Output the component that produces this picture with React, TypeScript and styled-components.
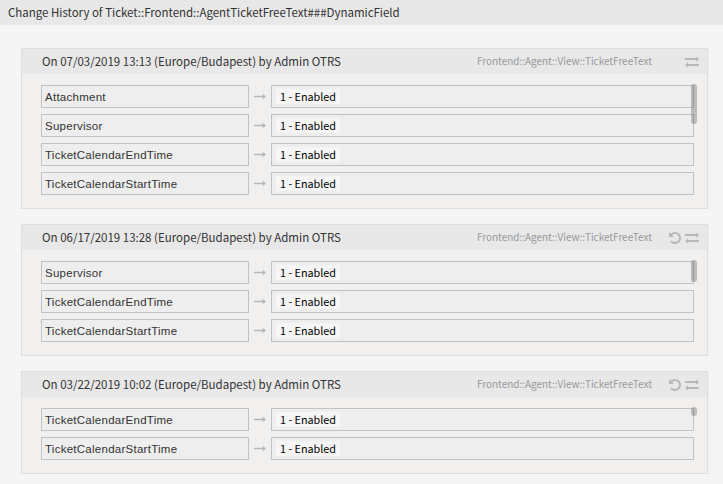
import React from 'react';
import styled, { createGlobalStyle } from 'styled-components';

const GlobalStyle = createGlobalStyle`
  * { box-sizing: border-box; }
  body {
    margin: 0;
    background: #f5f5f5;
    font-family: "Noto Sans CJK SC", "Noto Sans", sans-serif;
    color: #333;
    overflow: hidden;
  }
`;

const Page = styled.div`
  height: 484px;
  overflow: hidden;
`;

const TitleBar = styled.h1`
  margin: 0;
  height: 25px;
  padding-left: 8px;
  background: #e8e8e8;
  font-size: 11.5px;
  font-weight: 400;
  letter-spacing: -0.02px;
  line-height: 24px;
  white-space: nowrap;
`;

const HistoryList = styled.main`
  display: flex;
  flex-direction: column;
  gap: 15px;
  padding: 23px 14px 0 21px;
`;

const Card = styled.section`
  width: 687px;
  border: 1px solid #dddddd;
  background: #f1f0ee;
  box-shadow: 1px 0 0 #f0f0f0;
`;

const CardHeader = styled.header`
  display: flex;
  align-items: center;
  height: 25px;
  padding: 0 8px 0 20px;
  background: #e8e8e8;
  white-space: nowrap;
`;

const CardTitle = styled.h2`
  flex: 1;
  margin: 0;
  font-size: 11.5px;
  font-weight: 400;
  line-height: 24px;
  height: 25px;
`;

const Navigation = styled.span`
  width: 176px;
  height: 25px;
  margin-right: 15px;
  color: #999;
  font-size: 10px;
  letter-spacing: -0.03px;
  line-height: 24px;
`;

const Actions = styled.div`
  display: flex;
  align-items: center;
  justify-content: flex-end;
  gap: 4px;
  width: 31px;
  color: #b8b8b8;
  svg { display: block; }
`;

const Body = styled.div`
  position: relative;
  display: flex;
  flex-direction: column;
  gap: 6px;
  padding: 11px 13px 13px 19px;
`;

const Row = styled.div`
  display: grid;
  grid-template-columns: 208px 22px 423px;
  align-items: center;
  height: 23px;
`;

const Key = styled.div`
  height: 23px;
  padding-left: 3px;
  border: 1px solid #c2c2c2;
  background: #eee;
  font-family: "Liberation Sans", Arial, sans-serif;
  font-size: 11.5px;
  letter-spacing: 0.26px;
  line-height: 22px;
  white-space: nowrap;
`;

const Value = styled.div`
  display: flex;
  height: 23px;
  padding: 3px 4px;
  border: 1px solid #c2c2c2;
  background: #eee;
`;

const Tag = styled.span`
  width: 64px;
  height: 15px;
  padding-left: 4px;
  background: #f5f5f5;
  color: #000;
  font-size: 10.8px;
  line-height: 15px;
  white-space: nowrap;
`;

const ArrowSlot = styled.div`
  display: flex;
  justify-content: center;
  color: #b8b8b8;
`;

const ScrollThumb = styled.div<{ $height: number }>`
  position: absolute;
  top: 10px;
  right: 10px;
  width: 6px;
  height: ${(p) => p.$height}px;
  border-radius: 3px;
  background: rgba(80, 75, 75, 0.32);
`;

const Arrow = () => (
  <svg width="12" height="7" viewBox="0 0 12 7" fill="currentColor">
    <path d="M0 2.7h8.7V.8L12 3.5 8.7 6.2V4.3H0z" />
  </svg>
);

const Exchange = () => (
  <svg width="14" height="12" viewBox="0 0 14 12" fill="currentColor">
    <path d="M0 2.1h11V.4L14 3.1 11 5.8V4.1H0zM14 7.9H3V6.2L0 8.9l3 2.7V9.9h11z" />
  </svg>
);

const Undo = () => (
  <svg width="12" height="14" viewBox="0 0 1536 1792" fill="currentColor">
    <path d="M1536 896q0 156-61 298t-164 245-245 164-298 61q-172 0-327-72.5t-264-204.5q-7-10-6.5-22.5t8.5-20.5l137-138q10-9 25-9 16 2 23 12 73 95 179 147t225 52q104 0 198.5-40.5t163.5-109.5 109.5-163.5 40.5-198.5-40.5-198.5-109.5-163.5-163.5-109.5-198.5-40.5q-98 0-188 35.5t-160 101.5l137 138q31 30 14 69-17 40-59 40h-448q-26 0-45-19t-19-45v-448q0-42 40-59 39-17 69 14l130 129q107-101 244.5-156.5t284.5-55.5q156 0 298 61t245 164 164 245 61 298z" />
  </svg>
);

interface Entry {
  date: string;
  fields: string[];
  thumb: number;
  canReset: boolean;
}

const entries: Entry[] = [
  {
    date: '07/03/2019 13:13',
    fields: ['Attachment', 'Supervisor', 'TicketCalendarEndTime', 'TicketCalendarStartTime'],
    thumb: 40,
    canReset: false,
  },
  {
    date: '06/17/2019 13:28',
    fields: ['Supervisor', 'TicketCalendarEndTime', 'TicketCalendarStartTime'],
    thumb: 22,
    canReset: true,
  },
  {
    date: '03/22/2019 10:02',
    fields: ['TicketCalendarEndTime', 'TicketCalendarStartTime'],
    thumb: 9,
    canReset: true,
  },
];

export default function App() {
  return (
    <Page>
      <GlobalStyle />
      <TitleBar>Change History of Ticket::Frontend::AgentTicketFreeText###DynamicField</TitleBar>
      <HistoryList>
        {entries.map((entry) => (
          <Card key={entry.date}>
            <CardHeader>
              <CardTitle>On {entry.date} (Europe/Budapest) by Admin OTRS</CardTitle>
              <Navigation>Frontend::Agent::View::TicketFreeText</Navigation>
              <Actions>
                {entry.canReset && <Undo />}
                <Exchange />
              </Actions>
            </CardHeader>
            <Body>
              {entry.fields.map((field) => (
                <Row key={field}>
                  <Key>{field}</Key>
                  <ArrowSlot><Arrow /></ArrowSlot>
                  <Value><Tag>1 - Enabled</Tag></Value>
                </Row>
              ))}
              <ScrollThumb $height={entry.thumb} />
            </Body>
          </Card>
        ))}
      </HistoryList>
    </Page>
  );
}
